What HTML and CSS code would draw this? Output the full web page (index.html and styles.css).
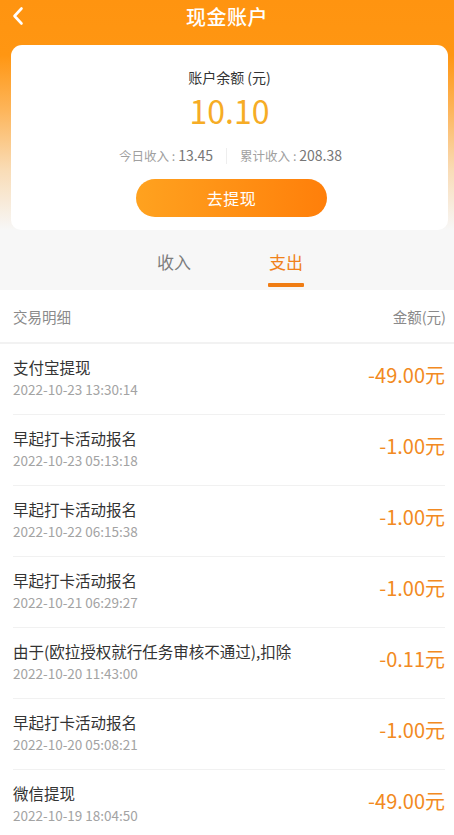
FILE: index.html
```html
<!DOCTYPE html>
<html lang="zh-CN">
<head>
<meta charset="utf-8">
<title>现金账户</title>
<link rel="stylesheet" href="styles.css">
</head>
<body>
<div class="top">
  <header class="nav">
    <svg class="back" width="14" height="20" viewBox="0 0 14 20"><path d="M10.5 2.5 L3.5 10 L10.5 17.5" fill="none" stroke="#fff" stroke-width="2.6" stroke-linecap="round" stroke-linejoin="round"/></svg>
    <h1 class="title">现金账户</h1>
  </header>
  <section class="card">
    <div class="label">账户余额 (元)</div>
    <div class="balance">10.10</div>
    <div class="stats">
      <span class="stat">今日收入 : <b>13.45</b></span>
      <span class="divider"></span>
      <span class="stat">累计收入 : <b>208.38</b></span>
    </div>
    <button class="withdraw">去提现</button>
  </section>
</div>
<nav class="tabs">
  <div class="tab">收入</div>
  <div class="tab active">支出</div>
</nav>
<main class="list">
  <div class="list-head"><span>交易明细</span><span>金额(元)</span></div>
  <div class="rows">
    <div class="row"><div class="info"><div class="name">支付宝提现</div><div class="time">2022-10-23 13:30:14</div></div><div class="amount">-49.00元</div></div>
    <div class="row"><div class="info"><div class="name">早起打卡活动报名</div><div class="time">2022-10-23 05:13:18</div></div><div class="amount">-1.00元</div></div>
    <div class="row"><div class="info"><div class="name">早起打卡活动报名</div><div class="time">2022-10-22 06:15:38</div></div><div class="amount">-1.00元</div></div>
    <div class="row"><div class="info"><div class="name">早起打卡活动报名</div><div class="time">2022-10-21 06:29:27</div></div><div class="amount">-1.00元</div></div>
    <div class="row"><div class="info"><div class="name">由于(欧拉授权就行任务审核不通过),扣除</div><div class="time">2022-10-20 11:43:00</div></div><div class="amount">-0.11元</div></div>
    <div class="row"><div class="info"><div class="name">早起打卡活动报名</div><div class="time">2022-10-20 05:08:21</div></div><div class="amount">-1.00元</div></div>
    <div class="row"><div class="info"><div class="name">微信提现</div><div class="time">2022-10-19 18:04:50</div></div><div class="amount">-49.00元</div></div>
  </div>
</main>
</body>
</html>
```
FILE: styles.css
```css
* { box-sizing: border-box; }
html, body { margin: 0; padding: 0; }
body {
  width: 454px;
  background: #ffffff;
  font-family: "Noto Sans CJK SC", "Noto Sans", sans-serif;
  overflow: hidden;
}
.top {
  background: linear-gradient(180deg, #ff9410 0px, #ff9612 55px, #fdb55a 110px, #f9dcb6 170px, #f7f7f7 230px);
}
.nav {
  height: 45px;
  display: flex;
  align-items: center;
  justify-content: center;
  position: relative;
}
.back {
  position: absolute;
  left: 11px;
  top: 6px;
}
.title {
  margin: 0;
  margin-top: -13px;
  color: #fff;
  font-size: 20px;
  font-weight: 500;
  letter-spacing: 0.5px;
}
.card {
  margin: 0 6px 0 11px;
  height: 185px;
  background: #fff;
  border-radius: 11px 11px 10px 10px;
  display: flex;
  flex-direction: column;
  align-items: center;
  padding-top: 21px;
}
.label {
  font-size: 14px;
  line-height: 22px;
  color: #333;
}
.balance {
  font-size: 32px;
  line-height: 42px;
  color: #f6ac25;
  margin-top: 1px;
}
.stats {
  margin-top: 15px;
  display: flex;
  align-items: center;
  gap: 13px;
  font-size: 12.5px;
  color: #a0a0a0;
  line-height: 18px;
  margin-left: 2px;
}
.stat b {
  font-weight: 400;
  font-size: 14px;
  color: #777;
}
.divider {
  width: 1px;
  height: 16px;
  background: #eee;
}
.withdraw {
  margin-top: 14px;
  width: 191px;
  height: 38px;
  border: 0;
  border-radius: 19px;
  background: linear-gradient(90deg, #ffa21f, #ff7f0a);
  color: #fff;
  font-family: inherit;
  font-size: 16px;
  letter-spacing: 0.5px;
  margin-left: 4px;
}
.tabs {
  height: 60px;
  background: #f7f7f7;
  display: flex;
  justify-content: center;
  gap: 76px;
  padding-left: 6px;
}
.tab {
  font-size: 17px;
  color: #7d7d7d;
  padding-top: 19px;
  line-height: 26px;
  width: 36px;
  text-align: center;
  position: relative;
}
.tab.active {
  color: #f0821a;
}
.tab.active::after {
  content: "";
  position: absolute;
  left: 0;
  right: 0;
  bottom: 3px;
  height: 4px;
  border-radius: 1px;
  background: #f07d14;
}
.list-head {
  height: 54px;
  display: flex;
  justify-content: space-between;
  align-items: center;
  padding: 0 8px 0 13px;
  font-size: 14.5px;
  color: #8a8a8a;
  border-bottom: 2px solid #f2f2f2;
}
.rows {
  padding: 0 9px 0 13px;
}
.row {
  height: 71px;
  display: flex;
  justify-content: space-between;
  align-items: center;
  border-bottom: 1px solid #f1f1f1;
}
.info {
  display: flex;
  flex-direction: column;
  gap: 1px;
  margin-top: -4px;
}
.name {
  font-size: 15.5px;
  line-height: 22px;
  color: #333;
}
.time {
  font-size: 13.5px;
  line-height: 20px;
  color: #a3a3a3;
}
.amount {
  font-size: 20px;
  color: #f28a22;
  margin-top: -10px;
}
```
